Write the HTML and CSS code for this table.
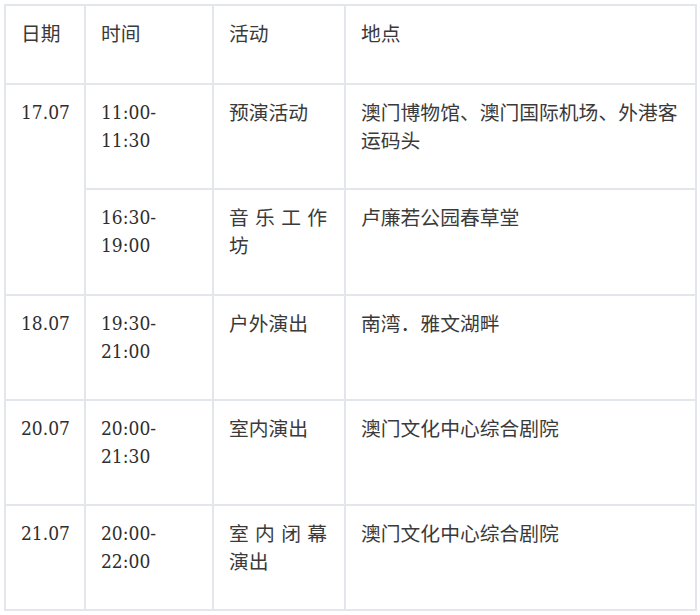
FILE: index.html
```html
<!DOCTYPE html>
<html lang="zh-CN">
<head>
<meta charset="utf-8">
<title>活动日程</title>
<link rel="stylesheet" href="styles.css">
</head>
<body>
<table class="schedule">
  <colgroup>
    <col class="c-date">
    <col class="c-time">
    <col class="c-act">
    <col class="c-place">
  </colgroup>
  <thead>
    <tr>
      <th>日期</th>
      <th>时间</th>
      <th>活动</th>
      <th class="place">地点</th>
    </tr>
  </thead>
  <tbody>
    <tr>
      <td class="num" rowspan="2">17.07</td>
      <td class="num">11:00-<br>11:30</td>
      <td class="act">预演活动</td>
      <td class="place">澳门博物馆、澳门国际机场、外港客运码头</td>
    </tr>
    <tr class="tall">
      <td class="num">16:30-<br>19:00</td>
      <td class="act">音乐工作坊</td>
      <td class="place">卢廉若公园春草堂</td>
    </tr>
    <tr>
      <td class="num">18.07</td>
      <td class="num">19:30-<br>21:00</td>
      <td class="act">户外演出</td>
      <td class="place">南湾．雅文湖畔</td>
    </tr>
    <tr>
      <td class="num">20.07</td>
      <td class="num">20:00-<br>21:30</td>
      <td class="act">室内演出</td>
      <td class="place">澳门文化中心综合剧院</td>
    </tr>
    <tr>
      <td class="num">21.07</td>
      <td class="num">20:00-<br>22:00</td>
      <td class="act">室内闭幕演出</td>
      <td class="place">澳门文化中心综合剧院</td>
    </tr>
  </tbody>
</table>
</body>
</html>
```

FILE: styles.css
```css
html, body {
  margin: 0;
  padding: 0;
  background: #ffffff;
}

body {
  padding: 4px 0 0 4px;
  font-family: "Noto Sans CJK SC", sans-serif;
  color: #3a3a3a;
}

.schedule {
  border-collapse: collapse;
  width: 691px;
  table-layout: fixed;
}

.c-date { width: 80px; }
.c-time { width: 128px; }
.c-act { width: 132px; }
.c-place { width: 351px; }

.schedule th,
.schedule td {
  border: 2px solid #e3e7ec;
  padding: 13px 16px 34px 15px;
  vertical-align: top;
  text-align: left;
  font-weight: normal;
  font-size: 19.8px;
  line-height: 28px;
  color: #3a3a3a;
}

.schedule th {
  padding-bottom: 36px;
}

.schedule .tall td {
  padding-bottom: 35px;
}

.schedule td.num {
  font-family: "DejaVu Serif Condensed", "Liberation Serif", "Noto Sans CJK SC", serif;
  font-size: 19px;
  font-stretch: condensed;
  color: #2e2e2e;
}

.schedule td.act {
  text-align: justify;
  padding-right: 17px;
}

.schedule .place {
  padding-right: 10px;
}
```
